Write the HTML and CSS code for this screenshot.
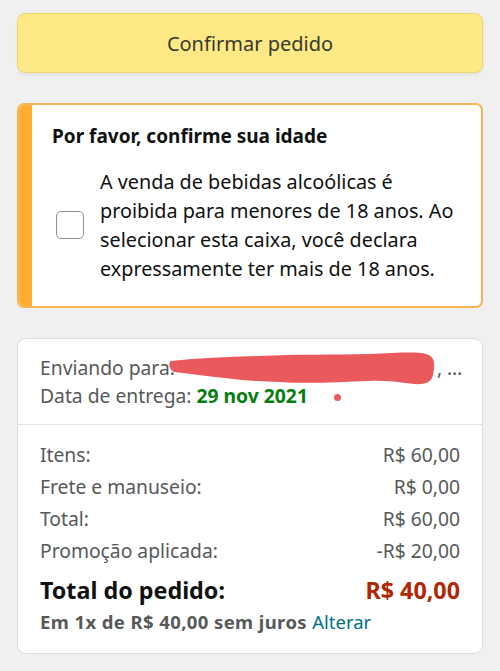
FILE: index.html
```html
<!DOCTYPE html>
<html lang="pt-BR">
<head>
<meta charset="utf-8">
<title>Confirmar pedido</title>
<link rel="stylesheet" href="styles.css">
</head>
<body>
<main class="page">
  <button class="confirm-btn" type="button">Confirmar pedido</button>

  <section class="alert">
    <div class="alert-bar"></div>
    <div class="alert-body">
      <h2 class="alert-title">Por favor, confirme sua idade</h2>
      <label class="age-check">
        <span class="checkbox"></span>
        <span class="age-text">A venda de bebidas alcoólicas é proibida para menores de 18 anos. Ao selecionar esta caixa, você declara expressamente ter mais de 18 anos.</span>
      </label>
    </div>
  </section>

  <section class="summary">
    <div class="ship">
      <div class="ship-line">Enviando para:<span class="redacted"><svg class="scribble" width="266" height="36" viewBox="0 0 266 36"><path d="M2 10 C 30 7, 60 6, 90 5 C 130 3, 160 4, 200 3 C 225 2, 240 1, 252 2 C 264 3, 266 10, 265 17 C 264 25, 264 32, 252 33 C 240 34, 228 29, 200 30 C 170 31, 140 33, 110 31 C 70 30, 40 25, 6 21 C 0 20, -1 11, 2 10 Z" fill="#ea5a5c"/></svg></span>, …</div>
      <div class="ship-line">Data de entrega: <strong class="date">29 nov 2021</strong><span class="dot"></span></div>
    </div>
    <div class="totals">
      <div class="row"><span>Itens:</span><span>R$ 60,00</span></div>
      <div class="row"><span>Frete e manuseio:</span><span>R$ 0,00</span></div>
      <div class="row"><span>Total:</span><span>R$ 60,00</span></div>
      <div class="row"><span>Promoção aplicada:</span><span>-R$ 20,00</span></div>
      <div class="row grand"><span>Total do pedido:</span><span class="price">R$ 40,00</span></div>
      <div class="installments">Em 1x de R$ 40,00 sem juros <a class="link" href="#">Alterar</a></div>
    </div>
  </section>
</main>
</body>
</html>
```
FILE: styles.css
```css
* { box-sizing: border-box; }
html, body { margin: 0; padding: 0; }
body {
  background: #f0f0f0;
  font-family: "Noto Sans", "Open Sans", Arial, sans-serif;
  color: #0f1111;
}
.page {
  padding: 13px 17px 0;
  display: flex;
  flex-direction: column;
}
.confirm-btn {
  height: 60px;
  width: 100%;
  border: 1px solid #f0d56c;
  border-radius: 8px;
  background: #ffe886;
  box-shadow: 0 2px 4px rgba(0,0,0,0.06);
  font-family: inherit;
  font-size: 20px;
  color: #363a2e;
  padding: 0;
}
.alert {
  margin-top: 30px;
  height: 205px;
  display: flex;
  border: 2px solid #f8b551;
  border-radius: 7px;
  background: #fff;
  overflow: hidden;
}
.alert-bar {
  width: 13px;
  background: #ffad33;
  flex: none;
}
.alert-body {
  flex: 1;
  padding: 19px 18px 0 20px;
}
.alert-title {
  margin: 0;
  font-size: 19px;
  font-weight: 700;
  line-height: 24px;
  color: #0f1111;
}
.age-check {
  display: flex;
  align-items: center;
  margin-top: 19px;
}
.checkbox {
  flex: none;
  width: 28px;
  height: 28px;
  border: 1.5px solid #8d9096;
  border-radius: 5px;
  margin-left: 4px;
  margin-right: 16px;
  background: #fff;
}
.age-text {
  font-size: 19.8px;
  line-height: 29px;
  color: #0f1111;
}
.summary {
  margin-top: 30px;
  background: #fff;
  border: 1px solid #dcdcdc;
  border-radius: 9px;
}
.ship {
  padding: 15px 22px 14px;
  border-bottom: 1px solid #e3e3e3;
  font-size: 19.3px;
  line-height: 28px;
  color: #565959;
}
.ship-line { white-space: nowrap; }
.redacted {
  display: inline-block;
  width: 262px;
  height: 18px;
  position: relative;
  vertical-align: middle;
}
.scribble {
  position: absolute;
  left: -6px;
  top: -10px;
}
.date { color: #067d0f; font-weight: 700; }
.dot {
  display: inline-block;
  width: 7px;
  height: 7px;
  border-radius: 50%;
  background: #ea5a5c;
  margin-left: 26px;
  vertical-align: middle;
}
.totals {
  padding: 14px 22px 17px;
}
.row {
  display: flex;
  justify-content: space-between;
  font-size: 19.3px;
  line-height: 32px;
  color: #565959;
}
.row.grand {
  font-size: 23.3px;
  font-weight: 700;
  line-height: 38px;
  color: #0f1111;
  margin-top: 4px;
}
.price { color: #b12704; }
.installments {
  margin-top: -1px;
  font-size: 18.5px;
  font-weight: 700;
  letter-spacing: 0.4px;
  line-height: 28px;
  color: #565959;
}
.link {
  color: #007185;
  font-weight: 400;
  letter-spacing: 0;
  text-decoration: none;
}
```
